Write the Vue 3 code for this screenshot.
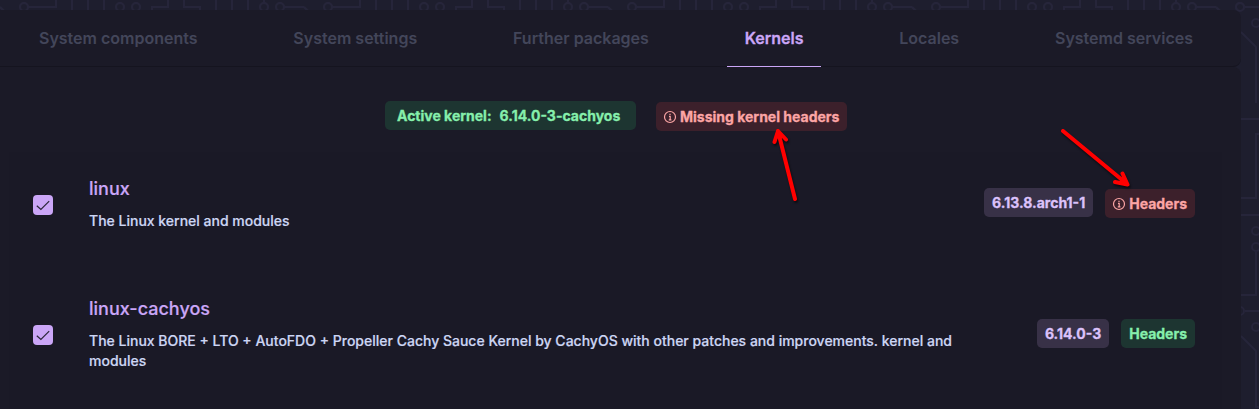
<template>
  <div class="page">
    <svg class="circuit" width="1259" height="409" viewBox="0 0 1259 409" aria-hidden="true">
      <defs>
        <pattern id="circuit-top" width="304" height="10" patternUnits="userSpaceOnUse">
          <path d="M0 7l4 4M28 7H56V0M72 0V10M88 0V10M104 0V10M152 10V7H168V0M184 0V7H200V10M216 0V10M232 0V10M248 0V10M264 0V3M284 7H304l4 4" />
          <circle v-for="x in nodes" :key="x" :cx="x" cy="7" r="4" />
        </pattern>
      </defs>
      <rect width="1259" height="10" fill="url(#circuit-top)" stroke="none" />
      <path d="M1241 32L1256 47V103M1241 119H1259M1259 134H1256V198H1241M1241 215H1259M1256 251V295H1241M1245 311H1259M1241 336L1256 351V407H1259" />
      <circle cx="1240" cy="7" r="4" />
      <circle cx="1256" cy="23" r="4" />
      <circle cx="1256" cy="231" r="4" />
      <circle cx="1256" cy="247" r="4" />
      <circle cx="1240" cy="311" r="4" />
      <circle cx="1256" cy="327" r="4" />
    </svg>

    <div class="content">
      <nav class="tabs">
        <button
          v-for="tab in tabs"
          :key="tab"
          :class="['tab', { active: activeTab === tab }]"
          @click="activeTab = tab"
        >
          {{ tab }}
        </button>
      </nav>

      <main class="panel">
        <div class="status">
          <span class="tag success active-kernel">
            <span>Active kernel:</span>
            <span>{{ activeKernel }}</span>
          </span>
          <span class="tag danger">
            <svg class="info" viewBox="0 0 14 14"><circle cx="7" cy="7" r="5.5" /><path d="M6 6.3H7.2V9.7M5.8 9.9H8.4M7 3.8V4.9" /></svg>
            Missing kernel headers
          </span>
        </div>

        <ul class="kernels">
          <li v-for="kernel in kernels" :key="kernel.name" class="kernel">
            <button
              class="checkbox"
              :class="{ checked: kernel.installed }"
              :aria-label="kernel.name"
              @click="kernel.installed = !kernel.installed"
            >
              <svg v-if="kernel.installed" viewBox="0 0 14 14"><path d="M.8 7.7L4.9 11.5L13.2 3.2" /></svg>
            </button>
            <div class="details">
              <h2>{{ kernel.name }}</h2>
              <p>{{ kernel.description }}</p>
            </div>
            <div class="tags">
              <span class="tag version">{{ kernel.version }}</span>
              <span :class="['tag', kernel.headers ? 'success' : 'danger']">
                <svg v-if="!kernel.headers" class="info" viewBox="0 0 14 14"><circle cx="7" cy="7" r="5.5" /><path d="M6 6.3H7.2V9.7M5.8 9.9H8.4M7 3.8V4.9" /></svg>
                Headers
              </span>
            </div>
          </li>
        </ul>
      </main>
    </div>

    <svg class="arrows" width="1259" height="409" viewBox="0 0 1259 409" aria-hidden="true">
      <path d="M795 199L778 131M774.5 142L778 131L786 139.500" />
      <path d="M1063 131L1127 184M1122.500 173.500L1127.500 184.500L1115 182" />
    </svg>
  </div>
</template>

<script setup>
import { ref } from 'vue'

const nodes = [24, 120, 136, 264, 280]

const tabs = [
  'System components',
  'System settings',
  'Further packages',
  'Kernels',
  'Locales',
  'Systemd services'
]
const activeTab = ref('Kernels')
const activeKernel = '6.14.0-3-cachyos'

const kernels = ref([
  {
    name: 'linux',
    description: 'The Linux kernel and modules',
    version: '6.13.8.arch1-1',
    installed: true,
    headers: false
  },
  {
    name: 'linux-cachyos',
    description: 'The Linux BORE + LTO + AutoFDO + Propeller Cachy Sauce Kernel by CachyOS with other patches and improvements. kernel and modules',
    version: '6.14.0-3',
    installed: true,
    headers: true
  }
])
</script>

<style>
body {
  background: #1e1e2e;
}
</style>

<style scoped>
.page {
  position: relative;
  width: 1259px;
  height: 409px;
  overflow: hidden;
  box-sizing: border-box;
  padding-top: 10px;
  background: #1e1e2e;
  font-family: Inter, sans-serif;
  color: #cdd6f4;
}

.circuit,
.arrows {
  position: absolute;
  top: 0;
  left: 0;
  fill: none;
  pointer-events: none;
}

.circuit {
  stroke: #26253a;
  stroke-width: 2;
}

.arrows {
  stroke: #ff0000;
  stroke-width: 4;
  stroke-linecap: round;
  stroke-linejoin: round;
  filter: drop-shadow(1px 2px 1px rgba(0, 0, 0, 0.6));
}

.content {
  position: relative;
  width: 1241px;
}

.tabs {
  display: flex;
  justify-content: space-between;
  box-sizing: border-box;
  height: 57px;
  padding: 0 30px 0 21px;
  background: #1b1a27;
  border-bottom: 1px solid #15141f;
  border-radius: 0 8px 8px 0;
}

.tab {
  height: 57px;
  padding: 0 18px;
  background: none;
  border: none;
  border-bottom: 1px solid transparent;
  font-family: inherit;
  font-size: 16px;
  font-weight: 600;
  color: #43465a;
  cursor: pointer;
}

.tab.active {
  color: #cba6f7;
  border-bottom-color: #cba6f7;
  -webkit-text-stroke: 0.3px;
}

.panel {
  box-sizing: border-box;
  height: 342px;
  padding: 34px 19px 0 9px;
  background: #1b1a27;
  border-radius: 0 8px 0 0;
}

.status {
  display: flex;
  align-items: flex-start;
  gap: 20px;
  height: 51px;
  padding-left: 376px;
}

.tag {
  display: flex;
  align-items: center;
  box-sizing: border-box;
  height: 29px;
  padding: 0 8px;
  border-radius: 5px;
  font-size: 14px;
  font-weight: 700;
  white-space: nowrap;
  -webkit-text-stroke: 0.3px;
}

.success {
  background: #1d3531;
  color: #86efac;
}

.danger {
  margin-top: 1px;
  background: #3c202b;
  color: #fca5a5;
}

.version {
  background: #383147;
  color: #dcc2fb;
}

.active-kernel {
  gap: 8px;
  width: 251px;
  padding: 0 12px;
}

.info {
  width: 14px;
  height: 14px;
  margin: 0 3px 0 -1px;
  fill: none;
  stroke: currentColor;
  stroke-width: 1.2;
}

.kernels {
  height: 257px;
  margin: 0;
  padding: 0;
  list-style: none;
  background: #1a1926;
}

.kernel {
  display: flex;
  align-items: center;
  box-sizing: border-box;
  padding: 33px 27px 33px 24px;
}

.kernel:first-child {
  padding-top: 25px;
}

.checkbox {
  display: flex;
  align-items: center;
  justify-content: center;
  flex: none;
  width: 20px;
  height: 20px;
  margin: 2px 36px 0 0;
  padding: 0;
  background: #313244;
  border: none;
  border-radius: 4px;
  cursor: pointer;
}

.checkbox.checked {
  background: #cba6f7;
}

.checkbox svg {
  width: 14px;
  height: 14px;
  fill: none;
  stroke: #292638;
  stroke-width: 1.2;
}

.details {
  width: 888px;
}

.details h2 {
  margin: 0 0 10px;
  font-size: 18px;
  line-height: 24px;
  font-weight: 500;
  color: #cba6f7;
  -webkit-text-stroke: 0.2px;
}

.details p {
  margin: 0;
  font-size: 14px;
  line-height: 20px;
  font-weight: 500;
  -webkit-text-stroke: 0.2px;
}

.tags {
  display: flex;
  align-items: flex-start;
  gap: 12px;
  margin: 0 0 2px auto;
}
</style>
